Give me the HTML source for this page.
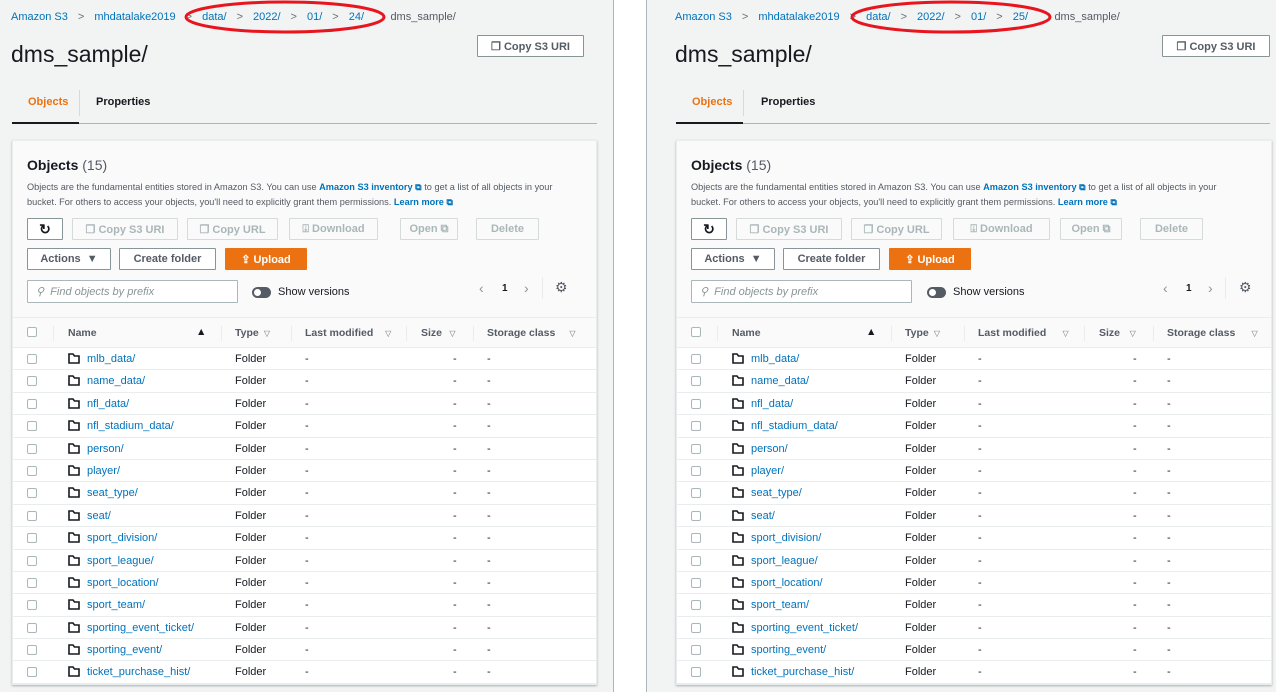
<!DOCTYPE html>
<html><head><meta charset="utf-8">
<style>
*{box-sizing:border-box;margin:0;padding:0}
body{width:1276px;height:692px;overflow:hidden;background:#fff;font-family:"Liberation Sans",sans-serif;color:#16191f;position:relative}
.panel{position:absolute;top:0;height:692px;background:#f2f3f3;overflow:hidden}
#L{left:0;width:614px;border-right:1px solid #aab7b8}
#R{left:646px;width:630px;border-left:1px solid #aab7b8}
.a{position:absolute;white-space:nowrap}
.bc{top:11px;font-size:11px;color:#0073bb}
.bc .chev{color:#687078;margin:0 10px}
.title{top:41px;font-size:23px;color:#16191f}
.btn{position:absolute;border:1px solid #879596;background:#fff;font-size:11px;font-weight:bold;color:#545b64;display:flex;align-items:center;justify-content:center;gap:5px;border-radius:1px}
.dis{border-color:#d5dbdb;color:#aab7b8;background:#fafafa}
.up{background:#ec7211;border-color:#ec7211;color:#fff}
.tab{top:96px;font-size:11px;font-weight:bold}
.box{position:absolute;top:140px;left:12px;height:545px;background:#fafafa;border:1px solid #eaeded;box-shadow:0 1px 2px rgba(0,28,36,.3)}
.desc{font-size:9.2px;color:#545b64;line-height:15px}
.desc b{color:#0073bb}
.hdr{position:absolute;left:0;right:0;top:176px;height:31px;border-top:1px solid #eaeded;border-bottom:1px solid #eaeded;font-size:10.5px;font-weight:bold;color:#545b64}
.rows{position:absolute;left:0;right:0;top:207px;background:#fff}
.row{height:22.4px;border-bottom:1px solid #eaeded;position:relative;font-size:11px}
.row>*{position:absolute;top:5px}
.cb{width:10px;height:10px;border:1px solid #aab7b8;border-radius:2px;background:#fff;top:6px}
.nm{color:#0073bb}
.fi{top:5px;width:12px;height:11px}
.tri{color:#687078;font-size:8px;font-weight:normal}
.sep{position:absolute;top:8px;width:1px;height:15px;background:#eaeded}
</style></head><body>
<svg width="0" height="0" style="position:absolute"><defs><symbol id="fold" viewBox="0 0 12 11"><path d="M1 1h4l1.5 2H11v7H1z" fill="none" stroke="#16191f" stroke-width="1.6" stroke-linejoin="miter"/></symbol></defs></svg>

<!-- LEFT -->
<div class="panel" id="L">
<div class="a bc" style="left:11px"><span>Amazon S3</span><span class="chev">&gt;</span><span>mhdatalake2019</span><span class="chev">&gt;</span><span>data/</span><span class="chev">&gt;</span><span>2022/</span><span class="chev">&gt;</span><span>01/</span><span class="chev">&gt;</span><span>24/</span><span class="chev" style="color:transparent">&gt;</span><span style="color:#545b64">dms_sample/</span></div>
<svg class="a" style="left:184px;top:0" width="204" height="36"><ellipse cx="101" cy="17" rx="99" ry="15" fill="none" stroke="#e8141e" stroke-width="3"/></svg>
<div class="a title" style="left:11px">dms_sample/</div>
<div class="btn" style="left:477px;top:35px;width:107px;height:22px;color:#545b64">❐ Copy S3 URI</div>
<div class="a tab" style="left:28px;color:#ec7211">Objects</div>
<div class="a" style="left:79px;top:90px;width:1px;height:26px;background:#d5dbdb"></div>
<div class="a tab" style="left:96px;color:#16191f">Properties</div>
<div class="a" style="left:12px;top:123px;width:585px;height:1px;background:#aab7b8"></div>
<div class="a" style="left:12px;top:122px;width:67px;height:2px;background:#16191f"></div>
<div class="box" style="width:585px">
 <div class="a" style="left:14px;top:16px;font-size:14px;font-weight:bold">Objects <span style="font-weight:normal;color:#545b64">(15)</span></div>
 <div class="a desc" style="left:14px;top:39px">Objects are the fundamental entities stored in Amazon S3. You can use <b>Amazon S3 inventory ⧉</b> to get a list of all objects in your<br>bucket. For others to access your objects, you'll need to explicitly grant them permissions. <b>Learn more ⧉</b></div>
 <div class="btn" style="left:14px;top:77px;width:36px;height:22px;color:#16191f;font-size:14px">↻</div>
 <div class="btn dis" style="left:59px;top:77px;width:106px;height:22px">❐ Copy S3 URI</div>
 <div class="btn dis" style="left:174px;top:77px;width:91px;height:22px">❐ Copy URL</div>
 <div class="btn dis" style="left:276px;top:77px;width:89px;height:22px">⍗ Download</div>
 <div class="btn dis" style="left:387px;top:77px;width:58px;height:22px">Open ⧉</div>
 <div class="btn dis" style="left:463px;top:77px;width:63px;height:22px">Delete</div>
 <div class="btn" style="left:14px;top:107px;width:84px;height:22px">Actions&nbsp;&nbsp;▼</div>
 <div class="btn" style="left:106px;top:107px;width:97px;height:22px">Create folder</div>
 <div class="btn up" style="left:212px;top:107px;width:82px;height:22px">⇪ Upload</div>
 <div class="btn" style="left:14px;top:139px;width:211px;height:23px;justify-content:flex-start;padding-left:8px;font-weight:normal;font-style:italic;color:#879596;border-color:#aab7b8">⚲&nbsp; Find objects by prefix</div>
 <div class="a" style="left:239px;top:146px;width:19px;height:11px;border-radius:6px;background:#545b64"><div style="position:absolute;left:2px;top:2px;width:7px;height:7px;border-radius:50%;background:#fff"></div></div>
 <div class="a" style="left:265px;top:145px;font-size:11px">Show versions</div>
 <div class="a" style="left:466px;top:139px;font-size:14px;color:#879596">‹</div>
 <div class="a" style="left:489px;top:142px;font-size:10px;font-weight:bold">1</div>
 <div class="a" style="left:511px;top:139px;font-size:14px;color:#879596">›</div>
 <div class="a" style="left:529px;top:136px;width:1px;height:22px;background:#eaeded"></div>
 <div class="a" style="left:542px;top:138px;font-size:14px;color:#545b64">⚙</div>
 <div class="hdr">
  <div class="cb a" style="left:14px;top:9px"></div><div class="sep" style="left:40px"></div>
  <div class="a" style="left:55px;top:9px">Name</div><div class="a" style="left:183px;top:8px;color:#16191f">▲</div><div class="sep" style="left:208px"></div>
  <div class="a" style="left:222px;top:9px">Type <span class="tri">&nbsp;▽</span></div><div class="sep" style="left:278px"></div>
  <div class="a" style="left:292px;top:9px">Last modified <span class="tri">&nbsp;&nbsp;&nbsp;&nbsp;▽</span></div><div class="sep" style="left:393px"></div>
  <div class="a" style="left:408px;top:9px">Size <span class="tri">&nbsp;&nbsp;▽</span></div><div class="sep" style="left:460px"></div>
  <div class="a" style="left:474px;top:9px">Storage class <span class="tri">&nbsp;&nbsp;&nbsp;&nbsp;&nbsp;▽</span></div>
 </div>
 <div class="rows">
  <div class="row"><div class="cb" style="left:14px"></div><svg class="fi" style="left:55px"><use href="#fold"/></svg><div class="nm" style="left:74px">mlb_data/</div><div style="left:222px">Folder</div><div style="left:292px">-</div><div style="left:440px">-</div><div style="left:474px">-</div></div>
  <div class="row"><div class="cb" style="left:14px"></div><svg class="fi" style="left:55px"><use href="#fold"/></svg><div class="nm" style="left:74px">name_data/</div><div style="left:222px">Folder</div><div style="left:292px">-</div><div style="left:440px">-</div><div style="left:474px">-</div></div>
  <div class="row"><div class="cb" style="left:14px"></div><svg class="fi" style="left:55px"><use href="#fold"/></svg><div class="nm" style="left:74px">nfl_data/</div><div style="left:222px">Folder</div><div style="left:292px">-</div><div style="left:440px">-</div><div style="left:474px">-</div></div>
  <div class="row"><div class="cb" style="left:14px"></div><svg class="fi" style="left:55px"><use href="#fold"/></svg><div class="nm" style="left:74px">nfl_stadium_data/</div><div style="left:222px">Folder</div><div style="left:292px">-</div><div style="left:440px">-</div><div style="left:474px">-</div></div>
  <div class="row"><div class="cb" style="left:14px"></div><svg class="fi" style="left:55px"><use href="#fold"/></svg><div class="nm" style="left:74px">person/</div><div style="left:222px">Folder</div><div style="left:292px">-</div><div style="left:440px">-</div><div style="left:474px">-</div></div>
  <div class="row"><div class="cb" style="left:14px"></div><svg class="fi" style="left:55px"><use href="#fold"/></svg><div class="nm" style="left:74px">player/</div><div style="left:222px">Folder</div><div style="left:292px">-</div><div style="left:440px">-</div><div style="left:474px">-</div></div>
  <div class="row"><div class="cb" style="left:14px"></div><svg class="fi" style="left:55px"><use href="#fold"/></svg><div class="nm" style="left:74px">seat_type/</div><div style="left:222px">Folder</div><div style="left:292px">-</div><div style="left:440px">-</div><div style="left:474px">-</div></div>
  <div class="row"><div class="cb" style="left:14px"></div><svg class="fi" style="left:55px"><use href="#fold"/></svg><div class="nm" style="left:74px">seat/</div><div style="left:222px">Folder</div><div style="left:292px">-</div><div style="left:440px">-</div><div style="left:474px">-</div></div>
  <div class="row"><div class="cb" style="left:14px"></div><svg class="fi" style="left:55px"><use href="#fold"/></svg><div class="nm" style="left:74px">sport_division/</div><div style="left:222px">Folder</div><div style="left:292px">-</div><div style="left:440px">-</div><div style="left:474px">-</div></div>
  <div class="row"><div class="cb" style="left:14px"></div><svg class="fi" style="left:55px"><use href="#fold"/></svg><div class="nm" style="left:74px">sport_league/</div><div style="left:222px">Folder</div><div style="left:292px">-</div><div style="left:440px">-</div><div style="left:474px">-</div></div>
  <div class="row"><div class="cb" style="left:14px"></div><svg class="fi" style="left:55px"><use href="#fold"/></svg><div class="nm" style="left:74px">sport_location/</div><div style="left:222px">Folder</div><div style="left:292px">-</div><div style="left:440px">-</div><div style="left:474px">-</div></div>
  <div class="row"><div class="cb" style="left:14px"></div><svg class="fi" style="left:55px"><use href="#fold"/></svg><div class="nm" style="left:74px">sport_team/</div><div style="left:222px">Folder</div><div style="left:292px">-</div><div style="left:440px">-</div><div style="left:474px">-</div></div>
  <div class="row"><div class="cb" style="left:14px"></div><svg class="fi" style="left:55px"><use href="#fold"/></svg><div class="nm" style="left:74px">sporting_event_ticket/</div><div style="left:222px">Folder</div><div style="left:292px">-</div><div style="left:440px">-</div><div style="left:474px">-</div></div>
  <div class="row"><div class="cb" style="left:14px"></div><svg class="fi" style="left:55px"><use href="#fold"/></svg><div class="nm" style="left:74px">sporting_event/</div><div style="left:222px">Folder</div><div style="left:292px">-</div><div style="left:440px">-</div><div style="left:474px">-</div></div>
  <div class="row"><div class="cb" style="left:14px"></div><svg class="fi" style="left:55px"><use href="#fold"/></svg><div class="nm" style="left:74px">ticket_purchase_hist/</div><div style="left:222px">Folder</div><div style="left:292px">-</div><div style="left:440px">-</div><div style="left:474px">-</div></div>
 </div>
</div>
</div>

<!-- RIGHT -->
<div class="panel" id="R">
<div class="a bc" style="left:28px"><span>Amazon S3</span><span class="chev">&gt;</span><span>mhdatalake2019</span><span class="chev">&gt;</span><span>data/</span><span class="chev">&gt;</span><span>2022/</span><span class="chev">&gt;</span><span>01/</span><span class="chev">&gt;</span><span>25/</span><span class="chev" style="color:transparent">&gt;</span><span style="color:#545b64">dms_sample/</span></div>
<svg class="a" style="left:203px;top:0" width="204" height="36"><ellipse cx="101" cy="17" rx="99" ry="15" fill="none" stroke="#e8141e" stroke-width="3"/></svg>
<div class="a title" style="left:28px">dms_sample/</div>
<div class="btn" style="left:515px;top:35px;width:108px;height:22px;color:#545b64">❐ Copy S3 URI</div>
<div class="a tab" style="left:45px;color:#ec7211">Objects</div>
<div class="a" style="left:96px;top:90px;width:1px;height:26px;background:#d5dbdb"></div>
<div class="a tab" style="left:114px;color:#16191f">Properties</div>
<div class="a" style="left:29px;top:123px;width:594px;height:1px;background:#aab7b8"></div>
<div class="a" style="left:29px;top:122px;width:67px;height:2px;background:#16191f"></div>
<div class="box" style="left:29px;width:596px">
 <div class="a" style="left:14px;top:16px;font-size:14px;font-weight:bold">Objects <span style="font-weight:normal;color:#545b64">(15)</span></div>
 <div class="a desc" style="left:14px;top:39px">Objects are the fundamental entities stored in Amazon S3. You can use <b>Amazon S3 inventory ⧉</b> to get a list of all objects in your<br>bucket. For others to access your objects, you'll need to explicitly grant them permissions. <b>Learn more ⧉</b></div>
 <div class="btn" style="left:14px;top:77px;width:36px;height:22px;color:#16191f;font-size:14px">↻</div>
 <div class="btn dis" style="left:59px;top:77px;width:106px;height:22px">❐ Copy S3 URI</div>
 <div class="btn dis" style="left:174px;top:77px;width:91px;height:22px">❐ Copy URL</div>
 <div class="btn dis" style="left:276px;top:77px;width:97px;height:22px">⍗ Download</div>
 <div class="btn dis" style="left:383px;top:77px;width:62px;height:22px">Open ⧉</div>
 <div class="btn dis" style="left:463px;top:77px;width:63px;height:22px">Delete</div>
 <div class="btn" style="left:14px;top:107px;width:84px;height:22px">Actions&nbsp;&nbsp;▼</div>
 <div class="btn" style="left:106px;top:107px;width:97px;height:22px">Create folder</div>
 <div class="btn up" style="left:212px;top:107px;width:82px;height:22px">⇪ Upload</div>
 <div class="btn" style="left:14px;top:139px;width:221px;height:23px;justify-content:flex-start;padding-left:8px;font-weight:normal;font-style:italic;color:#879596;border-color:#aab7b8">⚲&nbsp; Find objects by prefix</div>
 <div class="a" style="left:250px;top:146px;width:19px;height:11px;border-radius:6px;background:#545b64"><div style="position:absolute;left:2px;top:2px;width:7px;height:7px;border-radius:50%;background:#fff"></div></div>
 <div class="a" style="left:276px;top:145px;font-size:11px">Show versions</div>
 <div class="a" style="left:486px;top:139px;font-size:14px;color:#879596">‹</div>
 <div class="a" style="left:509px;top:142px;font-size:10px;font-weight:bold">1</div>
 <div class="a" style="left:531px;top:139px;font-size:14px;color:#879596">›</div>
 <div class="a" style="left:548px;top:136px;width:1px;height:22px;background:#eaeded"></div>
 <div class="a" style="left:562px;top:138px;font-size:14px;color:#545b64">⚙</div>
 <div class="hdr">
  <div class="cb a" style="left:14px;top:9px"></div><div class="sep" style="left:40px"></div>
  <div class="a" style="left:55px;top:9px">Name</div><div class="a" style="left:189px;top:8px;color:#16191f">▲</div><div class="sep" style="left:214px"></div>
  <div class="a" style="left:228px;top:9px">Type <span class="tri">&nbsp;▽</span></div><div class="sep" style="left:287px"></div>
  <div class="a" style="left:301px;top:9px">Last modified <span class="tri">&nbsp;&nbsp;&nbsp;&nbsp;&nbsp;&nbsp;▽</span></div><div class="sep" style="left:407px"></div>
  <div class="a" style="left:422px;top:9px">Size <span class="tri">&nbsp;&nbsp;&nbsp;▽</span></div><div class="sep" style="left:476px"></div>
  <div class="a" style="left:490px;top:9px">Storage class <span class="tri">&nbsp;&nbsp;&nbsp;&nbsp;&nbsp;&nbsp;▽</span></div>
 </div>
 <div class="rows">
  <div class="row"><div class="cb" style="left:14px"></div><svg class="fi" style="left:55px"><use href="#fold"/></svg><div class="nm" style="left:74px">mlb_data/</div><div style="left:228px">Folder</div><div style="left:301px">-</div><div style="left:456px">-</div><div style="left:490px">-</div></div>
  <div class="row"><div class="cb" style="left:14px"></div><svg class="fi" style="left:55px"><use href="#fold"/></svg><div class="nm" style="left:74px">name_data/</div><div style="left:228px">Folder</div><div style="left:301px">-</div><div style="left:456px">-</div><div style="left:490px">-</div></div>
  <div class="row"><div class="cb" style="left:14px"></div><svg class="fi" style="left:55px"><use href="#fold"/></svg><div class="nm" style="left:74px">nfl_data/</div><div style="left:228px">Folder</div><div style="left:301px">-</div><div style="left:456px">-</div><div style="left:490px">-</div></div>
  <div class="row"><div class="cb" style="left:14px"></div><svg class="fi" style="left:55px"><use href="#fold"/></svg><div class="nm" style="left:74px">nfl_stadium_data/</div><div style="left:228px">Folder</div><div style="left:301px">-</div><div style="left:456px">-</div><div style="left:490px">-</div></div>
  <div class="row"><div class="cb" style="left:14px"></div><svg class="fi" style="left:55px"><use href="#fold"/></svg><div class="nm" style="left:74px">person/</div><div style="left:228px">Folder</div><div style="left:301px">-</div><div style="left:456px">-</div><div style="left:490px">-</div></div>
  <div class="row"><div class="cb" style="left:14px"></div><svg class="fi" style="left:55px"><use href="#fold"/></svg><div class="nm" style="left:74px">player/</div><div style="left:228px">Folder</div><div style="left:301px">-</div><div style="left:456px">-</div><div style="left:490px">-</div></div>
  <div class="row"><div class="cb" style="left:14px"></div><svg class="fi" style="left:55px"><use href="#fold"/></svg><div class="nm" style="left:74px">seat_type/</div><div style="left:228px">Folder</div><div style="left:301px">-</div><div style="left:456px">-</div><div style="left:490px">-</div></div>
  <div class="row"><div class="cb" style="left:14px"></div><svg class="fi" style="left:55px"><use href="#fold"/></svg><div class="nm" style="left:74px">seat/</div><div style="left:228px">Folder</div><div style="left:301px">-</div><div style="left:456px">-</div><div style="left:490px">-</div></div>
  <div class="row"><div class="cb" style="left:14px"></div><svg class="fi" style="left:55px"><use href="#fold"/></svg><div class="nm" style="left:74px">sport_division/</div><div style="left:228px">Folder</div><div style="left:301px">-</div><div style="left:456px">-</div><div style="left:490px">-</div></div>
  <div class="row"><div class="cb" style="left:14px"></div><svg class="fi" style="left:55px"><use href="#fold"/></svg><div class="nm" style="left:74px">sport_league/</div><div style="left:228px">Folder</div><div style="left:301px">-</div><div style="left:456px">-</div><div style="left:490px">-</div></div>
  <div class="row"><div class="cb" style="left:14px"></div><svg class="fi" style="left:55px"><use href="#fold"/></svg><div class="nm" style="left:74px">sport_location/</div><div style="left:228px">Folder</div><div style="left:301px">-</div><div style="left:456px">-</div><div style="left:490px">-</div></div>
  <div class="row"><div class="cb" style="left:14px"></div><svg class="fi" style="left:55px"><use href="#fold"/></svg><div class="nm" style="left:74px">sport_team/</div><div style="left:228px">Folder</div><div style="left:301px">-</div><div style="left:456px">-</div><div style="left:490px">-</div></div>
  <div class="row"><div class="cb" style="left:14px"></div><svg class="fi" style="left:55px"><use href="#fold"/></svg><div class="nm" style="left:74px">sporting_event_ticket/</div><div style="left:228px">Folder</div><div style="left:301px">-</div><div style="left:456px">-</div><div style="left:490px">-</div></div>
  <div class="row"><div class="cb" style="left:14px"></div><svg class="fi" style="left:55px"><use href="#fold"/></svg><div class="nm" style="left:74px">sporting_event/</div><div style="left:228px">Folder</div><div style="left:301px">-</div><div style="left:456px">-</div><div style="left:490px">-</div></div>
  <div class="row"><div class="cb" style="left:14px"></div><svg class="fi" style="left:55px"><use href="#fold"/></svg><div class="nm" style="left:74px">ticket_purchase_hist/</div><div style="left:228px">Folder</div><div style="left:301px">-</div><div style="left:456px">-</div><div style="left:490px">-</div></div>
 </div>
</div>
</div>
</body></html>
